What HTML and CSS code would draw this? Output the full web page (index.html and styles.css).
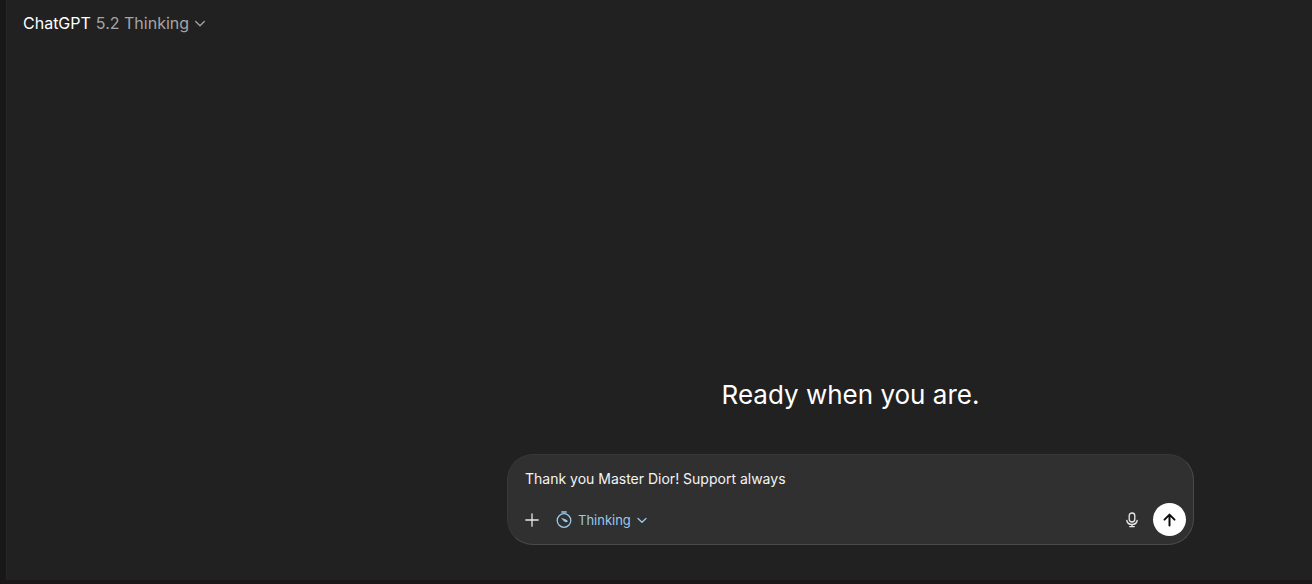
FILE: index.html
```html
<!DOCTYPE html>
<html lang="en">
<head>
<meta charset="utf-8">
<title>ChatGPT</title>
<link rel="stylesheet" href="styles.css">
</head>
<body>
<div class="app">
  <aside class="rail"></aside>
  <main class="main">
    <header class="topbar">
      <button class="model" type="button">
        <span class="model-name">ChatGPT</span>
        <span>5.2 Thinking</span>
        <svg class="chevron" width="12" height="12" viewBox="0 0 12 12" aria-hidden="true"><path d="M1.700 4.500 6 8.700l4.300-4.200"/></svg>
      </button>
    </header>
    <section class="conversation">
      <h1 class="greeting">Ready when you are.</h1>
      <form class="composer">
        <input class="prompt" type="text" aria-label="Message" value="Thank you Master Dior! Support always">
        <div class="tools">
          <button class="tool" type="button" aria-label="Add">
            <svg width="14" height="14" viewBox="0 0 14 14"><path d="M7 .8v12.4M.8 7h12.4"/></svg>
          </button>
          <button class="mode" type="button">
            <svg class="timer" width="16" height="18" viewBox="0 0 16 18" aria-hidden="true"><circle cx="8" cy="9.500" r="6.8"/><path d="M5.800 1h4.400"/><path class="hand" d="M5 6.800 10 8.500q1.800.9 1.800 2.300-1.500.8-3 0-1.200-.5-3.800-4Z"/></svg>
            <span>Thinking</span>
            <svg class="chevron" width="10" height="10" viewBox="0 0 10 10" aria-hidden="true"><path d="M1 3.500 5 7.300l4-3.800"/></svg>
          </button>
          <button class="tool mic" type="button" aria-label="Dictate">
            <svg width="12" height="16" viewBox="0 0 12 16"><rect x="3.2" y="1" width="5.6" height="9" rx="2.8"/><path d="M.8 8.5c.5 2.5 2.6 4 5.2 4s4.700-1.500 5.200-4M6 12.500v2M3.700 14.600h4.600"/></svg>
          </button>
          <button class="send" type="submit" aria-label="Send">
            <svg width="14" height="14" viewBox="0 0 14 14"><path d="M6.500 12.500V1.800M1.500 6.600l5-5 5 5"/></svg>
          </button>
        </div>
      </form>
    </section>
  </main>
</div>
</body>
</html>
```
FILE: styles.css
```css
* {
  box-sizing: border-box;
}

body {
  margin: 0;
  background: #212121;
  color: #fff;
  font-family: Inter, "Liberation Sans", sans-serif;
}

button {
  display: flex;
  align-items: center;
  padding: 0;
  border: 0;
  background: none;
  color: inherit;
  font: inherit;
}

svg {
  display: block;
  fill: none;
  stroke: currentColor;
  stroke-width: 1.3;
  stroke-linecap: round;
  stroke-linejoin: round;
}

.app {
  display: flex;
  min-height: 100vh;
  border-bottom: 4px solid #1a1819;
}

.rail {
  width: 6px;
  background: #181818;
}

.main {
  display: flex;
  flex: 1;
  flex-direction: column;
  border-left: 1px solid #262626;
}

.topbar {
  padding: 11px 16px;
}

.model {
  gap: 5px;
  color: #a5a5a5;
  font-size: 16px;
  line-height: 24px;
}

.model-name {
  color: #fff;
}

.conversation {
  display: flex;
  flex: 1;
  flex-direction: column;
  align-items: center;
  justify-content: flex-end;
  padding: 0 118px 35px 500px;
}

.greeting {
  margin: 0 0 42px;
  font-size: 26px;
  font-weight: 400;
  line-height: 34px;
}

.composer {
  width: 100%;
  padding: 12px 7px 8px 17px;
  border: 1px solid #4a4a4a;
  border-top-color: #383838;
  border-left-color: #383838;
  border-radius: 26px;
  background: #303030;
}

.prompt {
  display: block;
  width: 100%;
  height: 24px;
  margin-bottom: 12px;
  padding: 0;
  border: 0;
  outline: 0;
  background: none;
  color: #f4f4f4;
  font: 14px/24px Inter, "Liberation Sans", sans-serif;
}

.tools {
  display: flex;
  align-items: center;
}

.tool {
  color: #e8e8e8;
}

.mode {
  gap: 6px;
  margin-left: 17px;
  color: #99c9ec;
  font-size: 13px;
  line-height: 20px;
}

.timer .hand {
  fill: currentColor;
  stroke: none;
}

.mic {
  margin-left: auto;
  margin-right: 15px;
}

.send {
  justify-content: center;
  width: 33px;
  height: 33px;
  border-radius: 50%;
  background: #fff;
  color: #0d0d0d;
}

.send svg {
  stroke-width: 2;
}
```
